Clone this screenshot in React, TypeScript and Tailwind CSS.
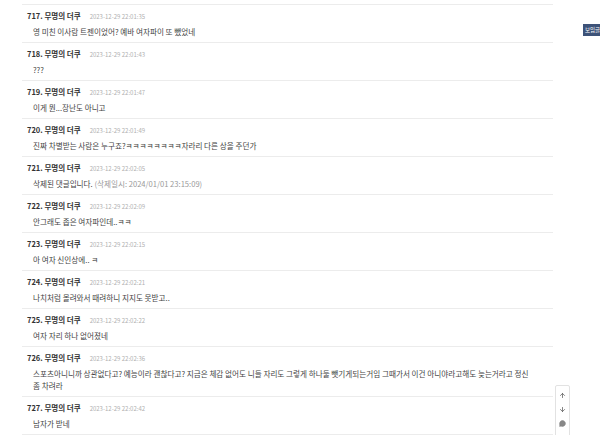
import { ArrowUp, ArrowDown, MessageCircle } from 'lucide-react'

interface Comment {
  no: number
  time: string
  body: string
  note?: string
}

const comments: Comment[] = [
  { no: 717, time: '2023-12-29 22:01:35', body: '영 미친 이사람 트젠이었어? 예바 여자파이 또 뺐었네' },
  { no: 718, time: '2023-12-29 22:01:43', body: '???' },
  { no: 719, time: '2023-12-29 22:01:47', body: '이게 뭔...장난도 아니고' },
  { no: 720, time: '2023-12-29 22:01:49', body: '진짜 차별받는 사람은 누구죠?ㅋㅋㅋㅋㅋㅋㅋㅋ자라리 다른 상을 주던가' },
  { no: 721, time: '2023-12-29 22:02:05', body: '삭제된 댓글입니다.', note: ' (삭제일시: 2024/01/01 23:15:09)' },
  { no: 722, time: '2023-12-29 22:02:09', body: '안그래도 좁은 여자파인데..ㅋㅋ' },
  { no: 723, time: '2023-12-29 22:02:15', body: '아 여자 신인상에.. ㅋ' },
  { no: 724, time: '2023-12-29 22:02:21', body: '나치처럼 몰려와서 때려하니 지지도 못받고..' },
  { no: 725, time: '2023-12-29 22:02:22', body: '여자 자리 하나 없어졌네' },
  {
    no: 726,
    time: '2023-12-29 22:02:36',
    body: '스포츠아니니까 상관없다고? 예능이라 괜찮다고? 지금은 체감 없어도 니들 자리도 그렇게 하나둘 뺏기게되는거임 그때가서 이건 아니야라고해도 늦는거라고 정신 좀 차려라',
  },
  { no: 727, time: '2023-12-29 22:02:42', body: '남자가 받네' },
]

export default function App() {
  return (
    <div
      className="relative w-[600px] h-[435px] overflow-hidden bg-white"
      style={{ fontFamily: '"Noto Sans CJK KR", "Noto Sans", sans-serif' }}
    >
      <div className="ml-[22px] w-[531px] mt-[4px] border-t border-[#ececec]">
        {comments.map(c => (
          <div key={c.no} className="border-b border-[#ececec] pt-[5px] pb-[4px]">
            <div className="flex items-baseline gap-[9px] h-[12px] leading-[12px] pl-[5px]">
              <span className="text-[7.5px] font-bold text-[#333]">{c.no}. 무명의 더쿠</span>
              <span className="text-[6px] text-[#b0b0b0]">{c.time}</span>
            </div>
            <p className="mt-[4px] pl-[11px] pr-[18px] text-[7.6px] leading-[12px] text-[#444] break-keep">
              {c.body}
              {c.note && <span className="text-[#999]">{c.note}</span>}
            </p>
          </div>
        ))}
      </div>

      <div className="absolute left-[583px] top-[24px] h-[12px] px-[2px] bg-[#3d5278] text-white text-[5.5px] leading-[12px] whitespace-nowrap">
        보임글
      </div>

      <div className="absolute left-[555px] top-[385px] w-[15px] h-[60px] bg-white border border-[#e2e2e2] rounded-[2px] flex flex-col items-center pt-[6px] gap-[7px] text-[#555]">
        <ArrowUp className="size-[7px]" strokeWidth={2.5} />
        <ArrowDown className="size-[7px]" strokeWidth={2.5} />
        <MessageCircle className="size-[7px] fill-[#888] text-[#888]" />
      </div>
    </div>
  )
}
